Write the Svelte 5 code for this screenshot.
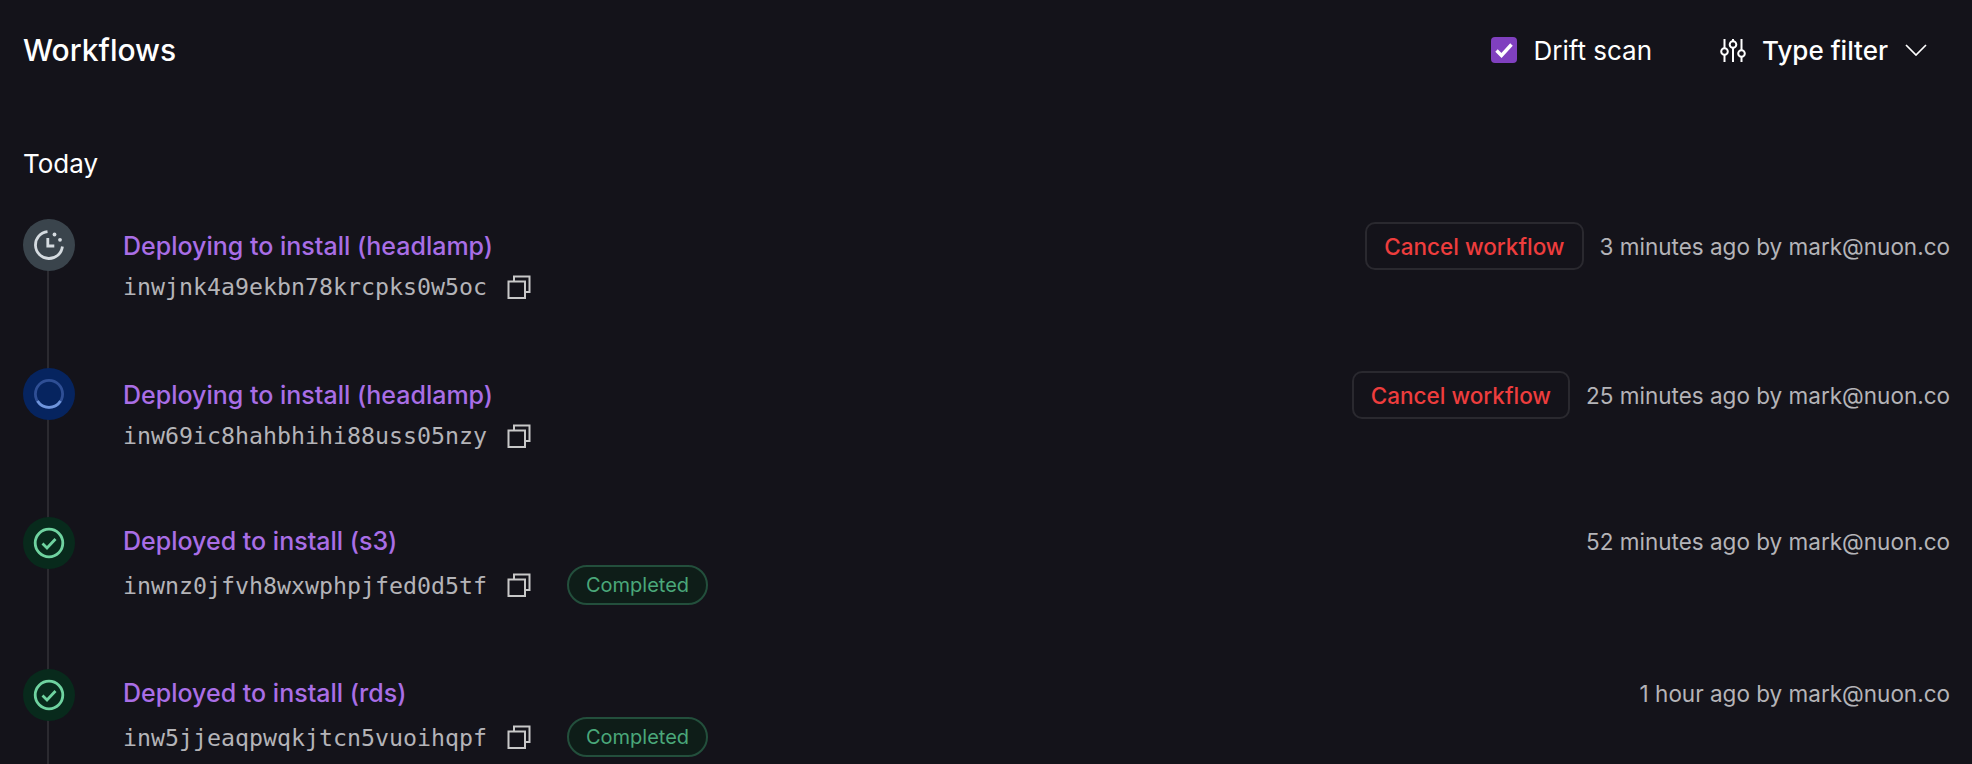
<script lang="ts">
  const workflows = [
    { title: "Deploying to install (headlamp)", id: "inwjnk4a9ekbn78krcpks0w5oc", state: "pending", time: "3 minutes ago by mark@nuon.co" },
    { title: "Deploying to install (headlamp)", id: "inw69ic8hahbhihi88uss05nzy", state: "running", time: "25 minutes ago by mark@nuon.co" },
    { title: "Deployed to install (s3)", id: "inwnz0jfvh8wxwphpjfed0d5tf", state: "done", time: "52 minutes ago by mark@nuon.co" },
    { title: "Deployed to install (rds)", id: "inw5jjeaqpwqkjtcn5vuoihqpf", state: "done", time: "1 hour ago by mark@nuon.co" }
  ];
</script>

<main class="page">
  <header class="top">
    <h1>Workflows</h1>
    <div class="controls">
      <label class="drift">
        <span class="box">
          <svg viewBox="0 0 26 26" width="26" height="26" fill="none" stroke="#fff" stroke-width="3.4">
            <path d="M5.5 13.5l5 5 10-11" />
          </svg>
        </span>
        Drift scan
      </label>
      <div class="type-filter">
        <svg viewBox="0 0 26 26" width="26" height="26" fill="none" stroke="#fff" stroke-width="2">
          <path d="M4.5 2v9M4.5 18v7M13 2v2M13 11v14M21.500 2v11M21.500 20v5" />
          <circle cx="4.500" cy="14.500" r="3.300" />
          <circle cx="13" cy="7.500" r="3.300" />
          <circle cx="21.500" cy="16.500" r="3.300" />
        </svg>
        <span>Type filter</span>
        <svg class="chev" viewBox="0 0 22 12" width="22" height="12" fill="none" stroke="#fff" stroke-width="1.700">
          <path d="M1 1l10 10 10-10" />
        </svg>
      </div>
    </div>
  </header>

  <h2>Today</h2>

  <ul class="timeline">
    {#each workflows as w}
      <li class="row">
        <div class="dot {w.state}">
          {#if w.state === "pending"}
            <svg viewBox="0 0 32 32" width="32" height="32" fill="none" stroke="#d5dbe0" stroke-width="2.800">
              <path d="M14.500 2.600A13.500 13.500 0 1 0 29.400 17.500" />
              <path d="M14.800 9v8h6.500" />
              <circle cx="21.500" cy="5.500" r="1.900" fill="#d5dbe0" stroke="none" />
              <circle cx="27" cy="10.800" r="1.900" fill="#d5dbe0" stroke="none" />
            </svg>
          {:else if w.state === "running"}
            <svg viewBox="0 0 32 32" width="32" height="32" fill="none" stroke-width="2.800">
              <circle cx="16" cy="16" r="13.600" stroke="#2f4f95" />
              <path d="M4.500 23A13.600 13.600 0 0 0 27.500 23" stroke="#6f95dc" />
            </svg>
          {:else}
            <svg viewBox="0 0 32 32" width="32" height="32" fill="none" stroke="#6fd3a0" stroke-width="2.800">
              <circle cx="16" cy="16" r="13.800" />
              <path d="M9.500 16.500l4.500 4.500 8.500-9" />
            </svg>
          {/if}
        </div>

        <div class="body">
          <div class="head" class:has-action={w.state !== "done"}>
            <span class="title">{w.title}</span>
            <div class="meta">
              {#if w.state !== "done"}
                <button>Cancel workflow</button>
              {/if}
              <span class="time">{w.time}</span>
            </div>
          </div>
          <div class="sub" class:has-badge={w.state === "done"}>
            <code>{w.id}</code>
            <svg class="copy" viewBox="0 0 24 24" width="24" height="24" fill="none" stroke="#c8c8c8" stroke-width="2">
              <path d="M7 6V1.500h15.500V17H18" />
              <rect x="1.500" y="6.500" width="16.500" height="16.500" />
            </svg>
            {#if w.state === "done"}
              <span class="badge">Completed</span>
            {/if}
          </div>
        </div>
      </li>
    {/each}
  </ul>
</main>

<style>
  :global(body) {
    margin: 0;
    background: #14131a;
  }

  .page {
    height: 764px;
    overflow: hidden;
    box-sizing: border-box;
    padding: 0 22px 0 23px;
    color: #fff;
    font-family: Inter, "Liberation Sans", sans-serif;
  }

  .top {
    display: flex;
    align-items: center;
    justify-content: space-between;
    height: 100px;
  }

  h1 {
    margin: 0;
    font-size: 30px;
    font-weight: 500;
  }

  .controls {
    display: flex;
    align-items: center;
    gap: 68px;
    padding-right: 23px;
    font-size: 26px;
  }

  .drift {
    display: flex;
    align-items: center;
    gap: 16px;
  }

  .box {
    display: block;
    width: 26px;
    height: 26px;
    border-radius: 4px;
    background: #8040bf;
  }

  .box svg {
    display: block;
  }

  .type-filter {
    display: flex;
    align-items: center;
    gap: 16px;
    font-weight: 500;
  }

  .chev {
    margin-left: 1px;
  }

  h2 {
    margin: 44px 0 0;
    font-size: 26px;
    line-height: 40px;
    font-weight: 400;
  }

  .timeline {
    list-style: none;
    margin: 35px 0 0;
    padding: 0;
  }

  .row {
    position: relative;
    display: flex;
    gap: 48px;
    box-sizing: border-box;
    min-height: 149px;
    padding-bottom: 64px;
  }

  .row::before {
    content: "";
    position: absolute;
    left: 24px;
    top: 0;
    bottom: 0;
    width: 2px;
    background: #2b2a30;
  }

  .dot {
    position: relative;
    flex: none;
    display: flex;
    align-items: center;
    justify-content: center;
    width: 52px;
    height: 52px;
    border-radius: 50%;
  }

  .dot.pending {
    background: #3a444c;
  }

  .dot.running {
    background: #06245f;
  }

  .dot.done {
    background: #082a1c;
  }

  .body {
    flex: 1;
    min-width: 0;
  }

  .head {
    display: flex;
    align-items: center;
    justify-content: space-between;
    height: 36px;
    margin-top: 6px;
  }

  .head.has-action {
    height: 48px;
    margin-top: 3px;
  }

  .title {
    font-size: 25px;
    font-weight: 500;
    color: #a96ee6;
  }

  .meta {
    display: flex;
    align-items: center;
    gap: 16px;
  }

  button {
    height: 48px;
    padding: 0 17px;
    box-sizing: border-box;
    border: 2px solid #2a292f;
    border-radius: 10px;
    background: transparent;
    color: #ee3d3d;
    font: 500 22.500px Inter, sans-serif;
  }

  .time {
    font-size: 22.500px;
    color: #b4b4b8;
  }

  .sub {
    display: flex;
    align-items: center;
    height: 31px;
    margin-top: 1px;
  }

  .sub.has-badge {
    height: 40px;
    margin-top: 6px;
  }

  code {
    font-family: "DejaVu Sans Mono", monospace;
    font-size: 23.250px;
    color: #b4b4b8;
  }

  .copy {
    flex: none;
    margin-left: 20px;
  }

  .badge {
    box-sizing: border-box;
    height: 40px;
    margin-left: 36px;
    padding: 0 17px;
    display: flex;
    align-items: center;
    border: 2px solid #234f3c;
    border-radius: 20px;
    background: #0e1d18;
    color: #4aa87a;
    font-size: 20px;
  }
</style>
